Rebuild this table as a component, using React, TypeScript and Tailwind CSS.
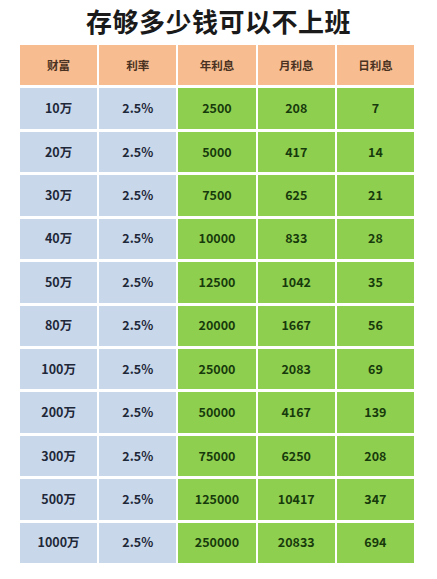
const rows = [
  ['10万', '2.5%', '2500', '208', '7'],
  ['20万', '2.5%', '5000', '417', '14'],
  ['30万', '2.5%', '7500', '625', '21'],
  ['40万', '2.5%', '10000', '833', '28'],
  ['50万', '2.5%', '12500', '1042', '35'],
  ['80万', '2.5%', '20000', '1667', '56'],
  ['100万', '2.5%', '25000', '2083', '69'],
  ['200万', '2.5%', '50000', '4167', '139'],
  ['300万', '2.5%', '75000', '6250', '208'],
  ['500万', '2.5%', '125000', '10417', '347'],
  ['1000万', '2.5%', '250000', '20833', '694'],
];

const headers = ['财富', '利率', '年利息', '月利息', '日利息'];

export default function App() {
  return (
    <div
      className="w-[437px] h-[579px] bg-white overflow-hidden"
      style={{ fontFamily: '"Noto Sans CJK SC", "Noto Sans", sans-serif' }}
    >
      <h1 className="text-center text-[26px] font-bold leading-none text-[#1a1a1a] pt-[8px] h-[45px] tracking-[0.5px]">
        存够多少钱可以不上班
      </h1>

      {/* table */}
      <div className="ml-[20px] w-[394px] h-[518px] grid grid-cols-5 grid-rows-12 gap-x-[2px] gap-y-[3px]">
        {headers.map((h) => (
          <div
            key={h}
            className="bg-[#f7bd90] flex items-center justify-center text-[11.5px] font-bold text-[#4a3222]"
          >
            {h}
          </div>
        ))}
        {rows.map((r) =>
          r.map((cell, i) => (
            <div
              key={r[0] + i}
              className={`flex items-center justify-center text-[12.5px] font-bold ${
                i < 2 ? 'bg-[#c9d7eb] text-[#1e2838]' : 'bg-[#8fcf4f] text-[#173a0c]'
              }`}
            >
              {cell}
            </div>
          ))
        )}
      </div>
    </div>
  );
}
